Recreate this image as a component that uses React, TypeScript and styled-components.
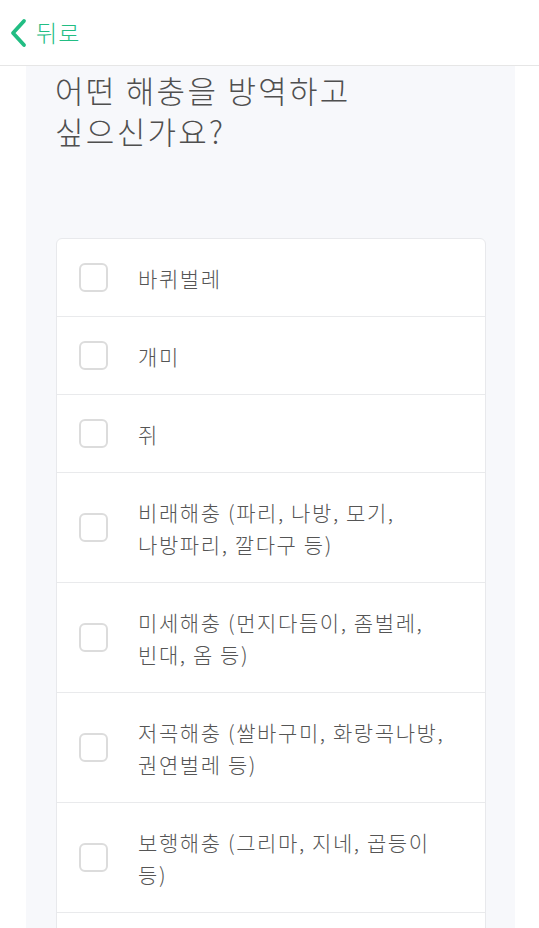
import styled, { createGlobalStyle } from "styled-components";

const GlobalStyle = createGlobalStyle`
  body {
    margin: 0;
    background: #ffffff;
    font-family: "Noto Sans CJK KR", "Noto Sans", sans-serif;
    overflow: hidden;
  }
`;

const Header = styled.header`
  height: 65px;
  border-bottom: 1px solid #e6e6e6;
  display: flex;
  align-items: center;
  padding-left: 9px;
  background: #fff;
`;

const BackButton = styled.button`
  display: flex;
  align-items: center;
  gap: 8px;
  border: none;
  background: none;
  padding: 0;
  color: #22bd83;
  font-family: inherit;
  font-size: 23px;
  font-weight: 300;
  letter-spacing: 1px;
  line-height: 1;
  cursor: pointer;
`;

const Panel = styled.main`
  margin: 0 24px 0 26px;
  background: #f7f8fb;
  padding: 3px 29px 0 29px;
  min-height: 900px;
`;

const Title = styled.h1`
  margin: 0 0 87px;
  font-size: 31px;
  font-weight: 300;
  letter-spacing: 2.3px;
  line-height: 41px;
  color: #4f4f4f;
`;

const Card = styled.ul`
  list-style: none;
  margin: 0 0 0 1px;
  padding: 0 0 60px;
  background: #fff;
  border: 1px solid #e8e9ec;
  border-radius: 6px;
  width: 430px;
  box-sizing: border-box;
`;

const Row = styled.li`
  display: flex;
  align-items: center;
  padding: 22.5px 20px 22.5px 22px;
  border-bottom: 1px solid #e9eaec;
`;

const Box = styled.span`
  flex: none;
  width: 25px;
  height: 25px;
  border: 2px solid #dcdcdc;
  border-radius: 6px;
  margin-right: 30px;
`;

const Label = styled.span`
  font-size: 21px;
  font-weight: 300;
  letter-spacing: 1.6px;
  line-height: 32px;
  color: #555555;
`;

const items: string[][] = [
  ["바퀴벌레"],
  ["개미"],
  ["쥐"],
  ["비래해충 (파리, 나방, 모기,", "나방파리, 깔다구 등)"],
  ["미세해충 (먼지다듬이, 좀벌레,", "빈대, 옴 등)"],
  ["저곡해충 (쌀바구미, 화랑곡나방,", "권연벌레 등)"],
  ["보행해충 (그리마, 지네, 곱등이", "등)"],
];

export default function App() {
  return (
    <>
      <GlobalStyle />
      <Header>
        <BackButton>
          <svg width="19" height="30" viewBox="0 0 19 30" fill="none">
            <path d="M15 3 L4 15 L15 27" stroke="#22bd83" strokeWidth="3.8" strokeLinecap="round" strokeLinejoin="round" />
          </svg>
          뒤로
        </BackButton>
      </Header>
      <Panel>
        <Title>
          어떤 해충을 방역하고
          <br />
          싶으신가요?
        </Title>
        <Card>
          {items.map((lines) => (
            <Row key={lines[0]}>
              <Box />
              <Label>
                {lines.map((l, i) => (
                  <span key={l}>
                    {i > 0 && <br />}
                    {l}
                  </span>
                ))}
              </Label>
            </Row>
          ))}
        </Card>
      </Panel>
    </>
  );
}
